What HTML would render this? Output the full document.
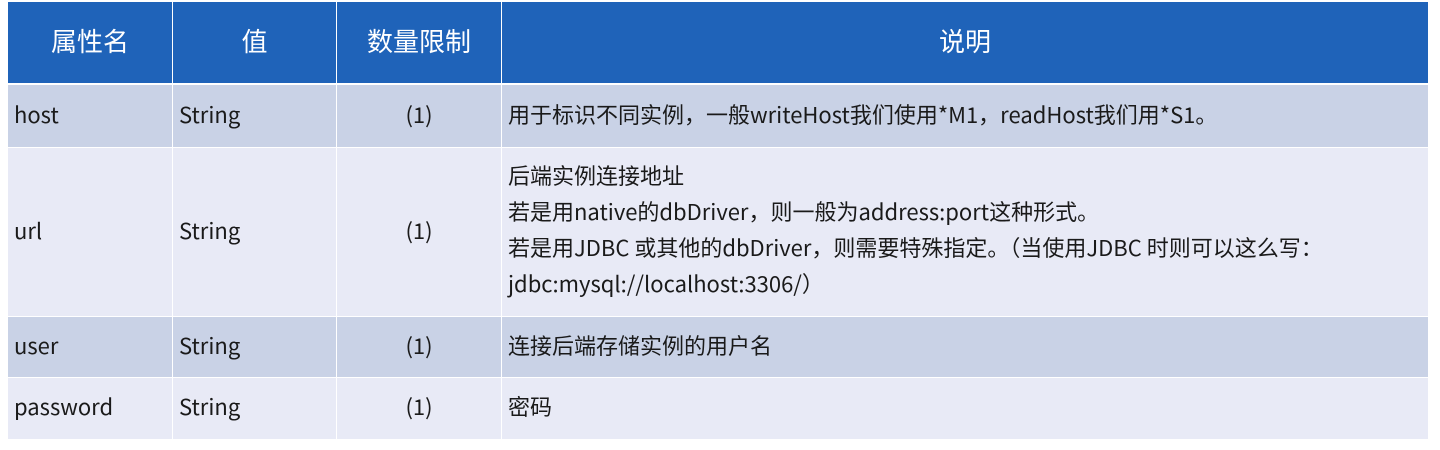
<!DOCTYPE html>
<html><head><meta charset="utf-8"><style>
body{margin:0;width:1440px;height:450px;background:#fff;overflow:hidden;font-family:"Noto Sans CJK SC","Liberation Sans",sans-serif;}
.c{position:absolute;box-sizing:border-box;font-size:22px;color:#1a1a1a;display:flex;align-items:center;white-space:nowrap;padding-bottom:5px}
.h{background:#1f63b9;color:#fff;justify-content:center;font-size:26px}
.d{background:#c9d2e6}.l{background:#e8eaf6}
.p{padding-left:6px}.ctr{justify-content:center}
.m{line-height:36px;display:block;padding-top:9px;padding-bottom:0}
</style></head><body>
<div class="c h" style="left:8px;top:2px;width:164px;height:81px">属性名</div>
<div class="c h" style="left:173px;top:2px;width:163px;height:81px">值</div>
<div class="c h" style="left:337px;top:2px;width:164px;height:81px">数量限制</div>
<div class="c h" style="left:502px;top:2px;width:926px;height:81px">说明</div>

<div class="c d p" style="left:8px;top:85px;width:164px;height:62px">host</div>
<div class="c d p" style="left:173px;top:85px;width:163px;height:62px">String</div>
<div class="c d ctr" style="left:337px;top:85px;width:164px;height:62px">(1)</div>
<div class="c d p" style="left:502px;top:85px;width:926px;height:62px">用于标识不同实例，一般writeHost我们使用*M1，readHost我们用*S1。</div>

<div class="c l p" style="left:8px;top:148px;width:164px;height:168px">url</div>
<div class="c l p" style="left:173px;top:148px;width:163px;height:168px">String</div>
<div class="c l ctr" style="left:337px;top:148px;width:164px;height:168px">(1)</div>
<div class="c l p m" style="left:502px;top:148px;width:926px;height:168px">后端实例连接地址<br>若是用native的dbDriver，则一般为address:port这种形式。<br>若是用JDBC 或其他的dbDriver，则需要特殊指定。（当使用JDBC 时则可以这么写：<br>jdbc:mysql://localhost:3306/）</div>

<div class="c d p" style="left:8px;top:317px;width:164px;height:60px">user</div>
<div class="c d p" style="left:173px;top:317px;width:163px;height:60px">String</div>
<div class="c d ctr" style="left:337px;top:317px;width:164px;height:60px">(1)</div>
<div class="c d p" style="left:502px;top:317px;width:926px;height:60px">连接后端存储实例的用户名</div>

<div class="c l p" style="left:8px;top:378px;width:164px;height:61px">password</div>
<div class="c l p" style="left:173px;top:378px;width:163px;height:61px">String</div>
<div class="c l ctr" style="left:337px;top:378px;width:164px;height:61px">(1)</div>
<div class="c l p" style="left:502px;top:378px;width:926px;height:61px">密码</div>
</body></html>
